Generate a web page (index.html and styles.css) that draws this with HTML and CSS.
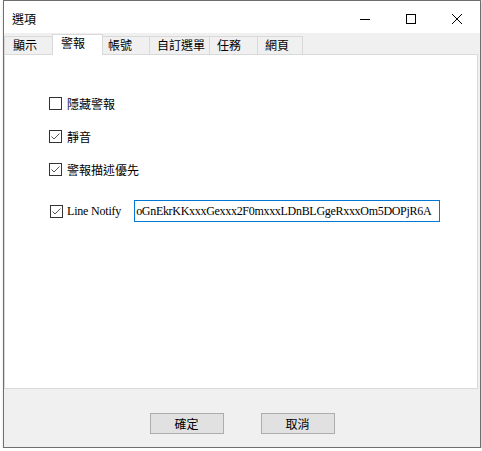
FILE: index.html
```html
<!DOCTYPE html>
<html lang="zh-Hant">
<head>
  <meta charset="UTF-8" />
  <title>選項</title>
  <link rel="stylesheet" href="styles.css">
</head>
<body>
  <div class="window">
    <div class="titlebar">
      <span class="title">選項</span>
      <div class="controls">
        <span class="ctrl">
          <svg width="10" height="10" viewBox="0 0 10 10"><path d="M0 5.5h10" stroke="#000" stroke-width="1"/></svg>
        </span>
        <span class="ctrl">
          <svg width="10" height="10" viewBox="0 0 10 10"><rect x="0.5" y="0.5" width="9" height="9" fill="none" stroke="#000" stroke-width="1"/></svg>
        </span>
        <span class="ctrl">
          <svg width="10" height="10" viewBox="0 0 10 10"><path d="M0 0L10 10M10 0L0 10" stroke="#000" stroke-width="1"/></svg>
        </span>
      </div>
    </div>

    <div class="tabs">
      <div class="tab tab-show">顯示</div>
      <div class="tab tab-alert active">警報</div>
      <div class="tab tab-account">帳號</div>
      <div class="tab tab-menu">自訂選單</div>
      <div class="tab tab-task">任務</div>
      <div class="tab tab-web">網頁</div>
    </div>

    <div class="panel">
      <label class="option">
        <span class="box"></span>
        <span class="label">隱藏警報</span>
      </label>
      <label class="option">
        <span class="box"><svg width="11" height="11" viewBox="0 0 11 11"><path d="M1.5 5.5L4 8L9.5 2.5" fill="none" stroke="#555" stroke-width="1"/></svg></span>
        <span class="label">靜音</span>
      </label>
      <label class="option">
        <span class="box"><svg width="11" height="11" viewBox="0 0 11 11"><path d="M1.5 5.5L4 8L9.5 2.5" fill="none" stroke="#555" stroke-width="1"/></svg></span>
        <span class="label">警報描述優先</span>
      </label>
      <div class="option notify">
        <span class="box"><svg width="11" height="11" viewBox="0 0 11 11"><path d="M1.5 5.5L4 8L9.5 2.5" fill="none" stroke="#555" stroke-width="1"/></svg></span>
        <span class="label serif">Line Notify</span>
        <input class="token" type="text" value="oGnEkrKKxxxGexxx2F0mxxxLDnBLGgeRxxxOm5DOPjR6A" />
      </div>
    </div>

    <div class="footer">
      <button class="btn">確定</button>
      <button class="btn">取消</button>
    </div>
  </div>
</body>
</html>
```

FILE: styles.css
```css
body {
  margin: 0;
  background-color: #ffffff;
  font-family: "Noto Sans CJK TC", "Noto Sans", sans-serif;
  font-size: 12px;
  color: #000;
}

.window {
  box-sizing: border-box;
  width: 478px;
  height: 448px;
  margin-left: 3px;
  border: 1px solid #6f6f6f;
  background-color: #f0f0f0;
  box-shadow: 1px 1px 3px rgba(0,0,0,0.25);
  display: flex;
  flex-direction: column;
}

.titlebar {
  height: 32px;
  background-color: #ffffff;
  display: flex;
  align-items: center;
  padding-top: 3px;
  box-sizing: border-box;
}

.title {
  margin-left: 8px;
  line-height: 14px;
}

.controls {
  margin-left: auto;
  display: flex;
}

.ctrl {
  width: 46px;
  height: 22px;
  display: flex;
  align-items: center;
  justify-content: center;
}

.tabs {
  height: 21px;
  display: flex;
  align-items: flex-end;
  position: relative;
  z-index: 1;
}

.tab {
  box-sizing: border-box;
  height: 18px;
  border: 1px solid #d9d9d9;
  border-bottom: none;
  border-right: none;
  line-height: 16px;
  padding-left: 7px;
  background-color: #f0f0f0;
}

.tab.active {
  height: 21px;
  margin-bottom: -1px;
  background-color: #ffffff;
  border-right: 1px solid #d9d9d9;
  line-height: 16px;
  padding-left: 8px;
}

.tab-show { width: 48px; padding-left: 8px; }
.tab-alert { width: 51px; }
.tab-account { width: 46px; border-left: none; padding-left: 5px; }
.tab-menu { width: 60px; }
.tab-task { width: 48px; }
.tab-web { width: 46px; border-right: 1px solid #d9d9d9; }

.panel {
  box-sizing: border-box;
  height: 335px;
  margin-right: 2px;
  border: 1px solid #d9d9d9;
  background-color: #ffffff;
  padding: 42px 0 0 44px;
  display: flex;
  flex-direction: column;
  gap: 20px;
}

.option {
  display: flex;
  align-items: center;
  height: 13px;
}

.box {
  box-sizing: border-box;
  width: 13px;
  height: 13px;
  border: 1px solid #333333;
  background-color: #ffffff;
  display: flex;
}

.label {
  margin-left: 5px;
  line-height: 13px;
}

.serif {
  font-family: "Liberation Serif", serif;
  font-size: 12px;
}

.option.notify {
  height: 22px;
  margin-top: 4px;
}

.notify .box {
  margin-left: 1px;
}

.notify .label {
  margin-left: 4px;
  letter-spacing: -0.2px;
}

.token {
  box-sizing: border-box;
  width: 306px;
  height: 22px;
  margin-left: 13px;
  border: 1px solid #0078d7;
  padding: 0 1px;
  font-family: "Liberation Serif", serif;
  font-size: 12px;
  letter-spacing: -0.3px;
  color: #000;
  outline: none;
}

.footer {
  flex: 1;
  display: flex;
  justify-content: center;
  gap: 37px;
  padding-top: 24px;
  box-sizing: border-box;
}

.btn {
  box-sizing: border-box;
  width: 74px;
  height: 21px;
  background-color: #e1e1e1;
  border: 1px solid #adadad;
  font-family: "Noto Sans CJK TC", sans-serif;
  font-size: 12px;
  color: #000;
  padding: 0;
  line-height: 18px;
}
```
